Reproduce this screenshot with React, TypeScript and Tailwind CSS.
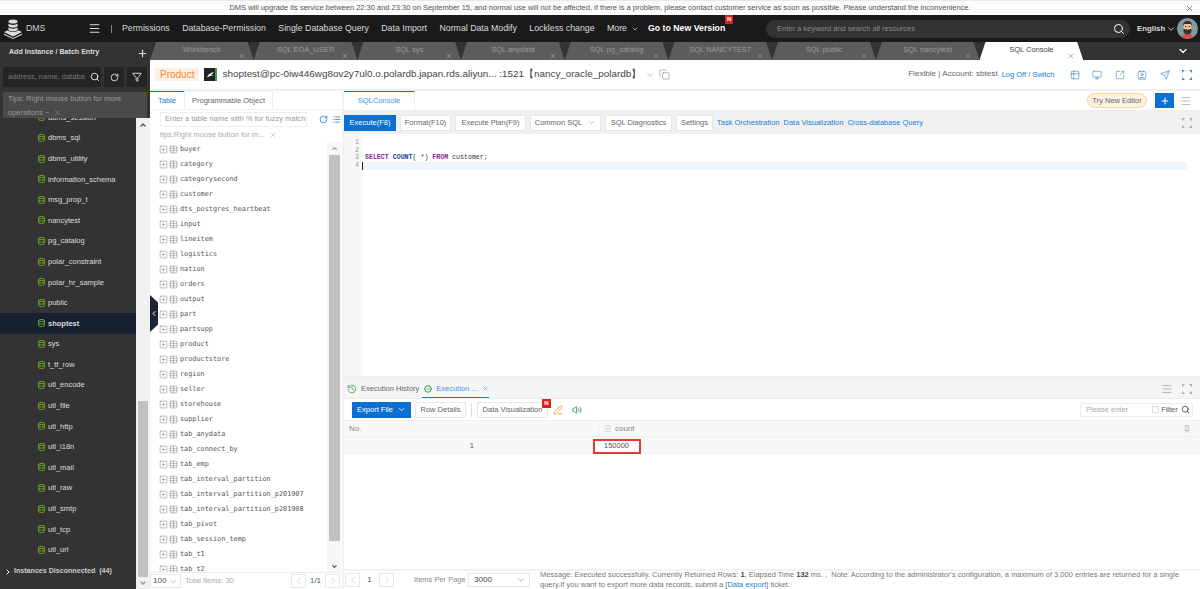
import React from 'react';
import { ChevronDown, ChevronLeft, ChevronRight, ChevronUp, CircleCheck, Contact, Copy, Filter, History, List, Menu, Monitor, PenLine, Pin, Plus, RotateCw, Search, Send, SquareArrowOutUpRight, SquarePlus, Table, Table2, Volume2, X } from 'lucide-react';

const navItems = ['Permissions', 'Database-Permission', 'Single Database Query', 'Data Import', 'Normal Data Modify', 'Lockless change'];
const tabs = ['Workbench', 'SQL EOA_USER', 'SQL sys', 'SQL anydata', 'SQL pg_catalog', 'SQL NANCYTEST', 'SQL public', 'SQL nancytest'];
const schemas = ['dbms_sql', 'dbms_utility', 'information_schema', 'msg_prop_t', 'nancytest', 'pg_catalog', 'polar_constraint', 'polar_hr_sample', 'public', 'shoptest', 'sys', 't_tf_row', 'utl_encode', 'utl_file', 'utl_http', 'utl_i18n', 'utl_mail', 'utl_raw', 'utl_smtp', 'utl_tcp', 'utl_url'];
const tables = ['buyer', 'category', 'categorysecond', 'customer', 'dts_postgres_heartbeat', 'input', 'lineitem', 'logistics', 'nation', 'orders', 'output', 'part', 'partsupp', 'product', 'productstore', 'region', 'seller', 'storehouse', 'supplier', 'tab_anydata', 'tab_connect_by', 'tab_emp', 'tab_interval_partition', 'tab_interval_partition_p201907', 'tab_interval_partition_p201908', 'tab_pivot', 'tab_session_temp', 'tab_t1', 'tab_t2'];

const ToolButton = ({ label, width, children }: { label: string; width: string; children?: React.ReactNode }) => (
  <button className={`flex h-[16px] items-center justify-center gap-[5px] border border-[#e8e8e8] bg-white text-[7.500px] whitespace-nowrap text-[#666] ${width}`}>
    {label}
    {children}
  </button>
);

const PageButton = ({ left }: { left?: boolean }) => (
  <span className="flex h-[14px] w-[15px] shrink-0 items-center justify-center border border-[#e8e8e8] text-[#bbb]">
    {left ? <ChevronLeft size={12} strokeWidth={1} /> : <ChevronRight size={12} strokeWidth={1} />}
  </span>
);

const Corners = ({ color }: { color: string }) => (
  <svg width="10" height="10" viewBox="0 0 10 10" fill="none" stroke={color} strokeWidth="1.200" className="shrink-0">
    <path d="M.6 2.400V.6h1.800M7.600 .6h1.800v1.800M.6 7.600v1.800h1.800M7.600 9.400h1.800V7.600" />
  </svg>
);

const Logo = () => (
  <svg width="18" height="20" viewBox="0 0 18 20" fill="#ddd" className="shrink-0">
    <ellipse cx="9" cy="2.500" rx="4.500" ry="2" />
    <path d="M4.500 4.600c1 1.800 8 1.800 9 0v2.600c-1 1.800-8 1.800-9 0zM4.500 8.300c1 1.800 8 1.800 9 0v2.800c-1 1.800-8 1.800-9 0z" />
    <path d="M0 13l4-1.800c1 2.400 9 2.400 10 0l4 1.800-9 4.400z" />
    <path d="M0 14.600l9 4.400 9-4.400v1.200l-9 4.200-9-4.200z" />
  </svg>
);

const Avatar = () => (
  <svg width="21" height="21" viewBox="0 0 21 21" className="shrink-0">
    <circle cx="10.500" cy="10.500" r="10.500" fill="#7f9ca3" />
    <path d="M5 19c1-2.500 3-3.500 5.500-3.500S15 16.500 16 19a10.500 10.500 0 0 1-11 0z" fill="#d9504a" />
    <rect x="6.500" y="5.500" width="8" height="9" rx="3" fill="#eec39a" />
    <path d="M6 8c-.5-3.500 2-5 4.500-5S15.500 4.500 15 8l-1-2H7z" fill="#3b3028" />
    <path d="M6.500 10.500c1 .8 2 1 4 1s3-.2 4-1V13c0 2-1.800 3.500-4 3.500s-4-1.500-4-3.500z" fill="#3b3028" />
    <rect x="8" y="8" width="1.300" height="1" fill="#222" />
    <rect x="11.800" y="8" width="1.300" height="1" fill="#222" />
  </svg>
);

const InstanceIcon = () => (
  <svg width="13" height="13" viewBox="0 0 13 13" className="mr-[5px] ml-[5px] shrink-0">
    <rect width="13" height="13" fill="#222" />
    <rect x="11" width="2" height="13" fill="#4a9a5a" />
    <path d="M3 9.500c1-3 3-4.500 7-5.500-1.500 1.500-2 2-2.500 3 .8 0 1.500 0 2.500.3-3 .4-5 1-7 2.200z" fill="#fff" />
  </svg>
);

const DatabaseIcon = () => (
  <svg width="7" height="8" viewBox="0 0 7 8" fill="none" stroke="#6fae1e" strokeWidth="1" className="shrink-0">
    <ellipse cx="3.500" cy="1.500" rx="2.800" ry="1.100" />
    <path d="M.7 1.500v5c0 .6 1.200 1.100 2.800 1.100s2.800-.5 2.800-1.100v-5M.7 4c0 .6 1.200 1.100 2.800 1.100S6.300 4.600 6.300 4" />
  </svg>
);

const SchemaRow = ({ name }: { name: string }) => (
  <li className={`flex h-[20.600px] items-center gap-[3px] pl-[38px] text-[7.500px] text-[#ddd] ${name === 'shoptest' ? 'bg-[#162030] font-bold' : ''}`}>
    <DatabaseIcon />
    {name}
  </li>
);

export default function App() {
  return (
    <div className="flex h-[589px] w-[1200px] flex-col overflow-hidden bg-white font-['Liberation_Sans',Arial,sans-serif]">
      {/* notice */}
      <div className="relative flex h-[15px] shrink-0 items-center justify-center border-t border-[#e8e8ee] bg-[#fbfbfb] text-[7.500px] text-[#555]">
        <span>DMS will upgrade its service between 22:30 and 23:30 on September 15, and normal use will not be affected, if there is a problem, please contact customer service as soon as possible. Please understand the inconvenience.</span>
        <X size={9} strokeWidth={1.500} className="absolute top-[3px] right-[6px] text-[#333]" />
      </div>

      {/* header */}
      <header className="flex h-[27px] shrink-0 items-center bg-[#1a1a1a] text-[#ddd]">
        <div className="ml-[4px] flex w-[84px] shrink-0 items-center gap-[4px]">
          <Logo />
          <span className="text-[8.750px] text-[#ccc]">DMS</span>
        </div>
        <Menu size={13} strokeWidth={2} className="shrink-0 text-[#ddd]" />
        <span className="mr-[10px] ml-[10px] h-[8px] w-px shrink-0 bg-[#888]" />
        <nav className="flex items-center gap-[12.500px] text-[8.750px] whitespace-nowrap">
          {navItems.map(n => <span key={n}>{n}</span>)}
          <span className="flex items-center gap-[4px]">More <ChevronDown size={8} /></span>
        </nav>
        <span className="relative ml-[9px] pt-[1px] text-[8.750px] font-bold whitespace-nowrap text-white">
          Go to New Version
          <span className="absolute -top-[6px] -right-[8px] flex h-[9px] w-[8px] items-center justify-center bg-[#d9261c] text-[6px] font-bold text-white">N</span>
        </span>
        <div className="ml-auto flex h-[18px] w-[364px] shrink-0 items-center justify-between rounded-full bg-[#333] pr-[5px] pl-[11px] text-[7.500px] text-[#8a8a8a]">
          Enter a keyword and search all resources
          <Search size={12} className="text-white" strokeWidth={2} />
        </div>
        <span className="ml-[7px] flex w-[40px] shrink-0 items-center gap-px text-[7.800px] font-bold text-[#ddd]">English <ChevronDown size={10} strokeWidth={2} /></span>
        <Avatar />
        <span className="w-[2px] shrink-0" />
      </header>

      <div className="relative flex min-h-0 flex-1">
        {/* sidebar */}
        <aside className="relative flex w-[150px] shrink-0 flex-col bg-[#333]">
          <div className="flex h-[20px] shrink-0 items-center justify-between pr-[2px] pl-[9px] text-[7.100px] font-bold text-[#ddd]">
            Add Instance / Batch Entry
            <Plus size={11} strokeWidth={2.500} className="mt-[3px] text-[#ddd]" />
          </div>
          <div className="mt-[5px] flex h-[20px] shrink-0 gap-[3px] pr-[3px] pl-[3px]">
            <div className="flex w-[98px] items-center justify-between bg-[#242424] pr-[1px] pl-[5px] text-[7.500px] text-[#777]">
              <span className="whitespace-nowrap">address, name, databa</span>
              <Search size={10} strokeWidth={2} className="shrink-0 text-white" />
            </div>
            <span className="flex w-[20px] items-center justify-center bg-[#242424]"><RotateCw size={9} strokeWidth={2} className="text-white" /></span>
            <span className="flex w-[20px] items-center justify-center bg-[#242424]"><Filter size={10} strokeWidth={2} className="text-white" /></span>
          </div>
          <div className="absolute top-[50px] left-[3px] z-10 h-[26px] w-[144px] bg-[#4a4a4a] px-[5px] text-[7.500px] leading-[13.500px] text-[#999]">
            <p>Tips: Right mouse button for more</p>
            <p className="flex items-center gap-[3px]">operations ~ <X size={9} strokeWidth={1} className="text-[#bbb]" /></p>
          </div>
          <div className="mt-[31px] flex min-h-0 flex-1">
            <div className="flex w-[136px] flex-col">
              <div className="h-[9.700px] shrink-0 overflow-hidden">
                <ul className="-mt-[10.900px]"><SchemaRow name="dbms_session" /></ul>
              </div>
              <ul className="flex-1">
                {schemas.map(s => <SchemaRow key={s} name={s} />)}
              </ul>
              <div className="flex h-[29px] shrink-0 items-center gap-[2px] pb-[6px] pl-[4px] text-[7.100px] font-bold text-[#ccc]">
                <ChevronRight size={8} strokeWidth={3} className="text-white" />
                Instances Disconnected&nbsp; (44)
              </div>
            </div>
            <div className="flex w-[14px] flex-col items-center bg-[#f1f1f1]">
              <ChevronUp size={8} strokeWidth={4} className="mt-[3px] text-[#555]" />
              <div className="mt-[272px] h-[176px] w-[10px] bg-[#c1c1c1]" />
              <ChevronDown size={8} strokeWidth={4} className="mt-[2px] text-[#999]" />
            </div>
          </div>
        </aside>

        {/* collapse handle */}
        <div className="absolute top-[253px] left-[150px] z-10 flex h-[37px] w-[8px] items-center justify-center bg-[#1c2330] [clip-path:polygon(0_0,100%_20%,100%_80%,0_100%)]">
          <ChevronLeft size={9} strokeWidth={3} className="text-white" />
        </div>

        <main className="flex min-w-0 flex-1 flex-col">
          {/* instance tabs */}
          <div className="relative flex h-[18px] shrink-0 bg-[#333]">
            {tabs.map(t => (
              <div key={t} className="relative flex w-[103.700px] shrink-0 items-center justify-center bg-[#5c5c5c] pb-[2px] text-[7.500px] text-[#999] [clip-path:polygon(6px_0,calc(100%-6px)_0,100%_100%,0_100%)]">
                {t}
                <X size={8} strokeWidth={1.500} className="absolute top-[10px] right-[8px] text-[#bbb]" />
              </div>
            ))}
            <div className="relative flex w-[103.700px] shrink-0 items-center justify-center bg-white pb-[2px] text-[7.500px] text-[#444] [clip-path:polygon(6px_0,calc(100%-6px)_0,100%_100%,0_100%)]">
              SQL Console
              <X size={8} strokeWidth={1.500} className="absolute top-[10px] right-[8px] text-[#666]" />
            </div>
            <ChevronDown size={12} strokeWidth={2.500} className="absolute top-[3px] right-[11px] text-white" />
          </div>

          {/* instance row */}
          <div className="flex h-[31px] shrink-0 items-center border-b-[2px] border-[#f0f0f0] pl-[5px]">
            <span className="bg-[#fdf0e2] px-[5px] text-[10px] leading-[13px] text-[#f08a30]">Product</span>
            <InstanceIcon />
            <span className="text-[9.900px] whitespace-nowrap text-[#444]">shoptest@pc-0iw446wg8ov2y7ul0.o.polardb.japan.rds.aliyun... :1521【nancy_oracle_polardb】</span>
            <ChevronDown size={10} strokeWidth={1} className="ml-[4px] text-[#666]" />
            <Copy size={11} strokeWidth={1} className="ml-[4px] text-[#666]" />
            <div className="ml-auto flex items-center text-[8.125px] whitespace-nowrap text-[#666]">
              Flexible | Account: sbtest
              <span className="ml-[4px] text-[7.500px] text-[#1a7fd4]">Log Off / Switch</span>
            </div>
            <div className="mr-[8px] ml-[15px] flex items-center gap-[12.500px] text-[#3a87c8]">
              <Table2 size={10} strokeWidth={1.500} />
              <Monitor size={10} strokeWidth={1.500} />
              <SquareArrowOutUpRight size={10} strokeWidth={1.500} />
              <Contact size={10} strokeWidth={1.500} />
              <Send size={10} strokeWidth={1.500} />
              <Corners color="#3a87c8" />
            </div>
          </div>

          <div className="flex min-h-0 flex-1 gap-[2px] bg-[#f2f2f2]">
            {/* tables panel */}
            <section className="flex w-[192px] shrink-0 flex-col bg-white">
              <div className="flex h-[19px] shrink-0 items-stretch border-b border-[#eee] bg-white text-[7.500px]">
                <span className="flex w-[34px] items-center justify-center border-t border-[#0a70d2] text-[#1a7fd4]">Table</span>
                <span className="flex w-[89px] items-center justify-center border-x border-t border-[#eee] bg-white whitespace-nowrap text-[#666]">Programmable Object</span>
              </div>
              <div className="mt-[1px] flex h-[16px] shrink-0 items-center pl-[10px]">
                <div className="flex h-[15px] w-[147px] shrink-0 items-center overflow-hidden border border-[#eee] pl-[4px] text-[7.500px] whitespace-nowrap text-[#999]">Enter a table name with % for fuzzy match</div>
                <RotateCw size={9} strokeWidth={2} className="ml-[12px] text-[#1a7fd4]" />
                <List size={9} strokeWidth={2} className="ml-[4px] text-[#1a7fd4]" />
              </div>
              <div className="flex h-[15px] shrink-0 items-center gap-[5px] pl-[10px] text-[7.500px] whitespace-nowrap text-[#aaa]">
                tips:Right mouse button for m...
                <X size={8} strokeWidth={1} className="text-[#777]" />
              </div>
              <div className="flex min-h-0 flex-1">
                <ul className="min-w-0 flex-1 overflow-hidden bg-white">
                  {tables.map(t => (
                    <li key={t} className="flex h-[15px] items-center pl-[9px] font-['DejaVu_Sans_Mono',monospace] text-[6.850px] text-[#555]">
                      <SquarePlus size={9} strokeWidth={1} className="mr-[1px] shrink-0 text-[#555]" />
                      <Table size={9} strokeWidth={1} className="mr-[2px] shrink-0 text-[#555]" />
                      {t}
                    </li>
                  ))}
                </ul>
                <div className="flex w-[14px] shrink-0 flex-col items-center bg-[#f7f7f7]">
                  <ChevronUp size={7} strokeWidth={4} className="mt-[3px] text-[#999]" />
                  <div className="mt-[3px] h-[386px] w-[11px] bg-[#c1c1c1]" />
                  <ChevronDown size={7} strokeWidth={4} className="mt-[22px] text-[#555]" />
                </div>
                <span className="w-[1px] shrink-0" />
              </div>
              {/* pagination under the table list */}
              <div className="flex h-[17px] shrink-0 items-center border-t border-[#eee] bg-white text-[7.500px] text-[#aaa]">
                <span className="flex h-[14px] w-[31px] items-center justify-between border border-[#e8e8e8] px-[2px] text-[8.100px] text-[#555]">100 <ChevronDown size={9} strokeWidth={1} /></span>
                <span className="ml-[4px]">Total Items: 30</span>
                <span className="ml-auto"><PageButton left /></span>
                <span className="w-[19px] text-center text-[8.100px] text-[#555]"><span className="text-[#1a7fd4]">1</span>/1</span>
                <PageButton />
                <span className="w-[2px] shrink-0" />
              </div>
            </section>

            {/* sql console */}
            <section className="flex min-w-0 flex-1 flex-col bg-white">
              <div className="flex h-[20px] shrink-0 items-center border-b border-[#eee]">
                <span className="flex h-full w-[71px] items-center justify-center border-t border-r border-t-[#0a70d2] border-r-[#eee] text-[7.500px] text-[#3b9ae8]">SQLConsole</span>
                <button className="ml-auto h-[15px] w-[60px] rounded-full border border-[#f8d68d] bg-[#fdf3e0] text-[7.500px] whitespace-nowrap text-[#666]">Try New Editor</button>
                <span className="ml-[8px] flex h-[15px] w-[19px] items-center justify-center bg-[#0a70d2]"><Plus size={10} strokeWidth={2.500} className="text-white" /></span>
                <Menu size={12} strokeWidth={1} className="mr-[8px] ml-[6px] text-[#777]" />
              </div>
              <div className="flex h-[23px] shrink-0 items-center gap-[4px] bg-[#f0f0f0]">
                <button className="h-[16px] w-[52px] bg-[#0a70d2] text-[7.500px] whitespace-nowrap text-white">Execute(F8)</button>
                <ToolButton label="Format(F10)" width="w-[51px]" />
                <ToolButton label="Execute Plan(F9)" width="w-[71px]" />
                <ToolButton label="Common SQL" width="w-[71px]"><ChevronDown size={9} strokeWidth={1} /></ToolButton>
                <ToolButton label="SQL Diagnostics" width="w-[67px]" />
                <ToolButton label="Settings" width="w-[37px]" />
                <span className="flex gap-[4px] text-[7.500px] whitespace-nowrap text-[#1a7fd4]">
                  <span>Task Orchestration</span>
                  <span>Data Visualization</span>
                  <span>Cross-database Query</span>
                </span>
                <span className="mr-[8px] ml-auto"><Corners color="#aaa" /></span>
              </div>
              <div className="flex h-[242px] shrink-0 font-['Liberation_Mono',monospace] text-[6.600px]">
                <div className="flex w-[18px] shrink-0 flex-col items-end bg-[#f7f7f7] pt-[5px] pr-[3px] leading-[7.700px] text-[#999]">
                  <span>1</span><span>2</span><span>3</span><span>4</span>
                </div>
                <div className="min-w-0 flex-1 pt-[5px] leading-[7.700px]">
                  <div className="h-[7.700px]" />
                  <div className="h-[7.700px]" />
                  <div className="h-[7.700px] pl-[3px] text-[#333]">
                    <span className="font-bold text-[#8a1f9c]">SELECT</span> <span className="font-bold text-[#1c3f94]">COUNT</span>( *) <span className="font-bold text-[#8a1f9c]">FROM</span> customer;
                  </div>
                  <div className="mr-[13px] h-[8px] border-l border-[#222] bg-[#eef5fd]" />
                </div>
              </div>
              <div className="h-[4px] shrink-0 bg-[#f2f2f2]" />

              {/* results */}
              <div className="flex h-[19px] shrink-0 items-center border-b border-[#eee] bg-[#f5f5f5] pl-[3px] text-[7.500px] whitespace-nowrap text-[#666]">
                <History size={10} strokeWidth={2} className="mr-[4px] shrink-0 text-[#4aa84a]" />
                Execution History
                <span className="ml-[3px] flex h-full w-[67px] shrink-0 items-center gap-[4px] border-b border-[#1a7fd4] pl-[2px] text-[#3b9ae8]">
                  <CircleCheck size={8} strokeWidth={3} className="text-[#30a030]" />
                  Execution ...
                  <X size={7} strokeWidth={1.500} className="ml-[1px] text-[#1a7fd4]" />
                </span>
                <Menu size={12} strokeWidth={1} className="ml-auto text-[#777]" />
                <span className="mr-[8px] ml-[9px]"><Corners color="#aaa" /></span>
              </div>
              <div className="flex h-[21px] shrink-0 items-center pl-[8px]">
                <button className="flex h-[16px] w-[59px] items-center justify-center gap-[4px] bg-[#0a70d2] text-[7.500px] whitespace-nowrap text-white">Export File <ChevronDown size={9} strokeWidth={2} /></button>
                <span className="ml-[4px]"><ToolButton label="Row Details" width="w-[51px]" /></span>
                <span className="mx-[5px] h-[14px] w-px bg-[#ddd]" />
                <span className="relative">
                  <ToolButton label="Data Visualization" width="w-[71px]" />
                  <span className="absolute -top-[3px] -right-[3px] flex h-[9px] w-[9px] items-center justify-center bg-[#d9261c] text-[6px] font-bold text-white">N</span>
                </span>
                <PenLine size={10} strokeWidth={2} className="ml-[5px] text-[#e8a030]" />
                <Volume2 size={10} strokeWidth={2} className="ml-[9px] text-[#2e8b57]" />
                <div className="mr-[7px] ml-auto flex h-[14px] w-[113px] items-center border border-[#eee] pr-[2px] pl-[5px] text-[7.500px] whitespace-nowrap text-[#aaa]">
                  Please enter
                  <span className="ml-[24px] h-[7px] w-[7px] shrink-0 border border-[#ddd]" />
                  <span className="ml-[2px] text-[#555]">Filter</span>
                  <Search size={9} strokeWidth={2} className="ml-auto shrink-0 text-[#333]" />
                </div>
              </div>
              <div className="flex h-[17px] shrink-0 items-center border-y border-[#eee] bg-[#f8f8f8] text-[8px] text-[#888]">
                <span className="w-[255px] border-r border-[#eee] pl-[5px] leading-[15px]">No.</span>
                <span className="flex items-center gap-[3px] pl-[4px]"><List size={9} strokeWidth={1} /> count</span>
                <Pin size={8} strokeWidth={1.500} className="mr-[9px] ml-auto text-[#888]" />
              </div>
              <div className="flex h-[18px] shrink-0 items-center bg-[#f7f7f7] text-[7.500px] text-[#555]">
                <span className="w-[130px] shrink-0 text-right">1</span>
                <span className="ml-[119px] flex h-[15px] w-[48px] items-center border-2 border-[#e53935] bg-white pl-[9px]">150000</span>
              </div>
              <div className="flex-1" />

              {/* message bar */}
              <div className="flex h-[20px] shrink-0 items-center border-t-[2px] border-[#f2f2f2] pl-[1px] text-[7.500px] text-[#888]">
                <PageButton left />
                <span className="w-[19px] shrink-0 text-center text-[8.100px] text-[#555]">1</span>
                <PageButton />
                <span className="ml-[20px] w-[51px] shrink-0 whitespace-nowrap">Items Per Page</span>
                <span className="ml-[3px] flex h-[14px] w-[62px] shrink-0 items-center justify-between border border-[#e8e8e8] pr-[3px] pl-[5px] text-[8.100px] text-[#444]">3000 <ChevronDown size={10} strokeWidth={1} /></span>
                <p className="ml-[10px] min-w-0 flex-1 pr-[6px] leading-[10px] text-[#777]">
                  Message: Executed successfully. Currently Returned Rows: <b className="text-[#444]">1</b>, Elapsed Time <b className="text-[#444]">132</b> ms. ,&nbsp; Note: According to the administrator's configuration, a maximum of 3,000 entries are returned for a single query.If you want to export more data records, submit a [<span className="text-[#1a7fd4]">Data export</span>] ticket.
                </p>
              </div>
            </section>
          </div>
        </main>
      </div>
    </div>
  );
}
